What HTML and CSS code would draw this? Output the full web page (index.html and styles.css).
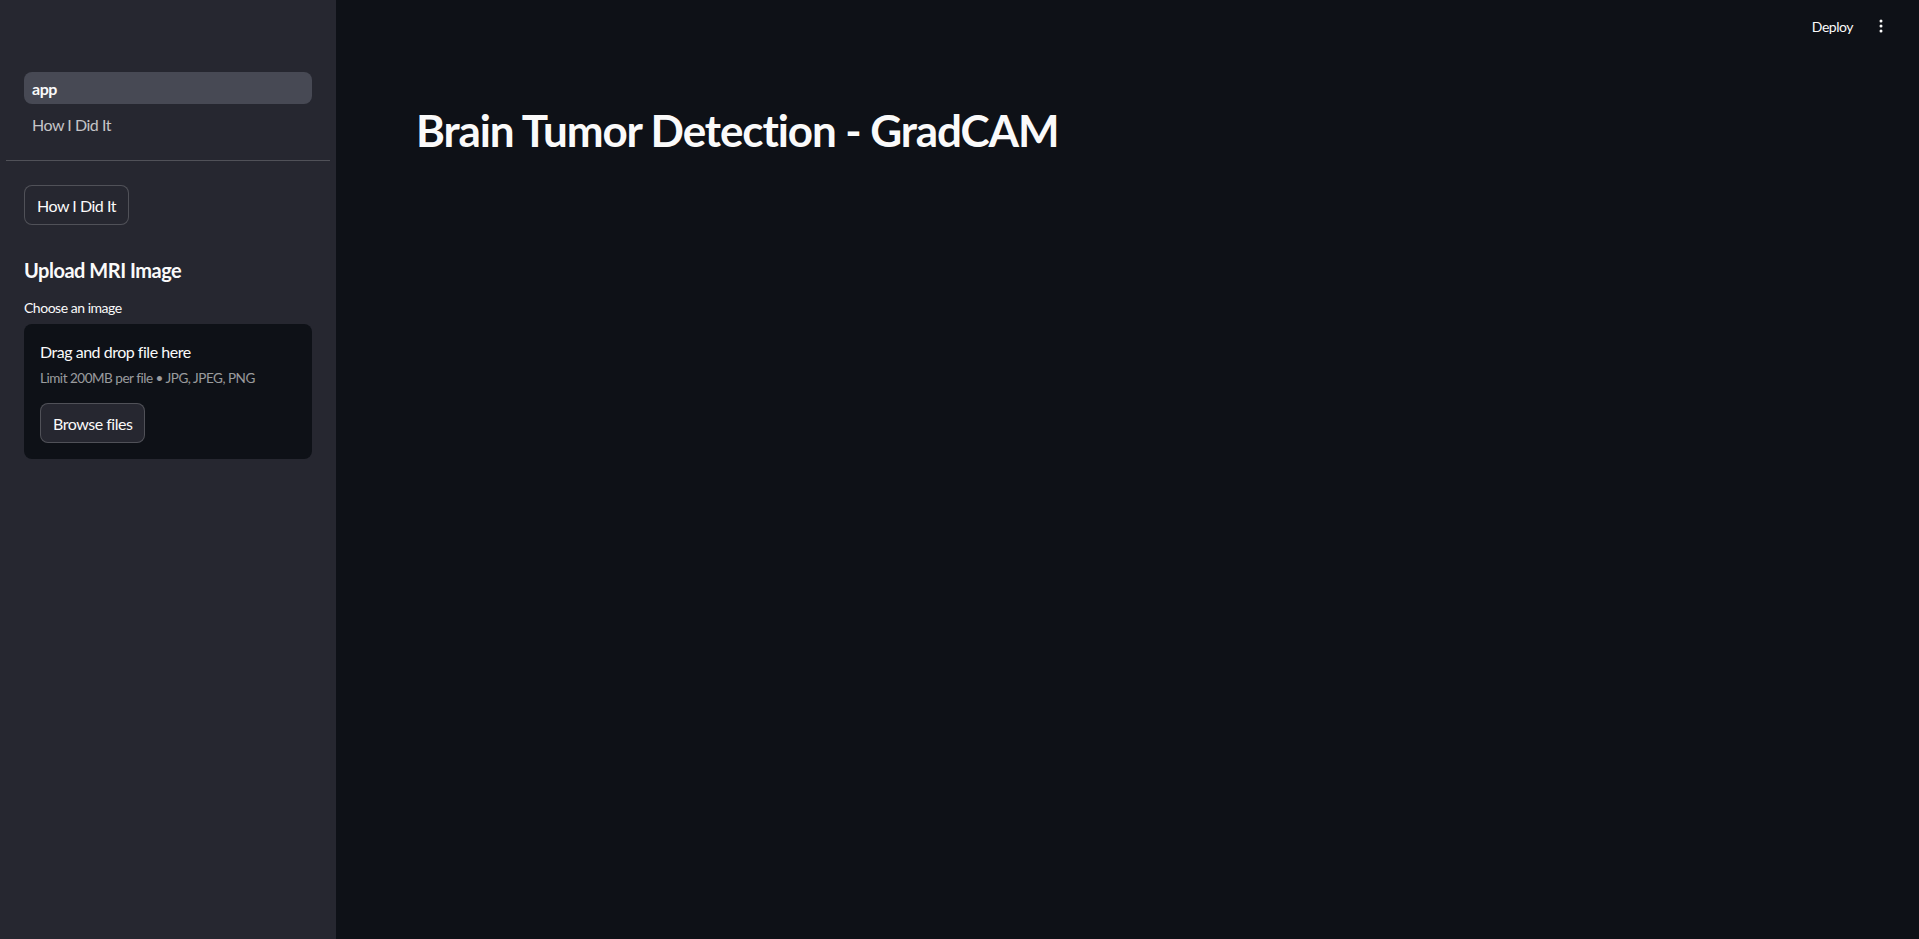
FILE: index.html
```html
<!DOCTYPE html>
<html>
<head>
<meta charset="utf-8">
<link rel="stylesheet" href="styles.css">
</head>
<body>
<div class="app">
  <aside class="sidebar">
    <nav class="nav">
      <a class="nav-item active">app</a>
      <a class="nav-item">How I Did It</a>
    </nav>
    <hr class="divider">
    <div class="side-content">
      <button class="btn">How I Did It</button>
      <h3 class="side-heading">Upload MRI Image</h3>
      <label class="label">Choose an image</label>
      <div class="dropzone">
        <div class="dz-title">Drag and drop file here</div>
        <div class="dz-sub">Limit 200MB per file • JPG, JPEG, PNG</div>
        <button class="btn btn-browse">Browse files</button>
      </div>
    </div>
  </aside>
  <main class="main">
    <header class="header">
      <span class="deploy">Deploy</span>
      <svg class="menu" width="16" height="16" viewBox="0 0 16 16"><circle cx="8" cy="3" r="1.5" fill="#fafafa"/><circle cx="8" cy="8" r="1.5" fill="#fafafa"/><circle cx="8" cy="13" r="1.5" fill="#fafafa"/></svg>
    </header>
    <div class="block">
      <h1 class="title">Brain Tumor Detection - GradCAM</h1>
    </div>
  </main>
</div>
</body>
</html>
```
FILE: styles.css
```css
* { box-sizing: border-box; }
html, body { margin: 0; padding: 0; height: 100%; }
body {
  font-family: Lato, "Noto Sans", sans-serif;
  color: #fafafa;
  background: #0e1117;
  letter-spacing: -0.03em;
}
.app { display: flex; height: 939px; }
.sidebar {
  width: 336px;
  flex: none;
  background: #262730;
  padding-top: 72px;
}
.nav { display: flex; flex-direction: column; gap: 4px; padding: 0 24px; }
.nav-item {
  display: flex; align-items: center;
  height: 32px; padding: 0 8px;
  border-radius: 8px;
  font-size: 16px;
  color: rgba(250,250,250,0.75);
}
.nav-item.active { background: #474954; color: #fafafa; font-weight: 700; }
.divider {
  border: none; border-top: 1px solid rgba(250,250,250,0.2);
  margin: 20px 6px 0;
}
.side-content { padding: 24px 24px 0; display: flex; flex-direction: column; align-items: flex-start; }
.btn {
  font-family: inherit;
  font-size: 16px;
  letter-spacing: -0.03em;
  color: #fafafa;
  background: #262730;
  border: 1px solid rgba(250,250,250,0.2);
  border-radius: 8px;
  height: 40px;
  padding: 0 12px;
}
.side-heading {
  font-size: 20px; font-weight: 700; margin: 31px 0 0; line-height: 28px;
}
.label { font-size: 14px; margin-top: 14px; line-height: 20px; }
.dropzone {
  margin-top: 6px;
  width: 288px;
  background: #0e1117;
  border-radius: 8px;
  padding: 16px;
}
.dz-title { font-size: 16px; line-height: 24px; }
.dz-sub { font-size: 13.5px; letter-spacing: -0.035em; color: rgba(250,250,250,0.6); line-height: 20px; margin-top: 4px; }
.btn-browse { margin-top: 15px; }
.main { flex: 1; display: flex; flex-direction: column; }
.header { height: 52px; display: flex; align-items: center; justify-content: flex-end; padding-right: 30px; gap: 20px; }
.deploy { font-size: 14px; }
.block { padding: 52px 80px 0; }
.title { margin: 0; font-size: 44px; font-weight: 700; line-height: 1.2; letter-spacing: -0.025em; }
```
